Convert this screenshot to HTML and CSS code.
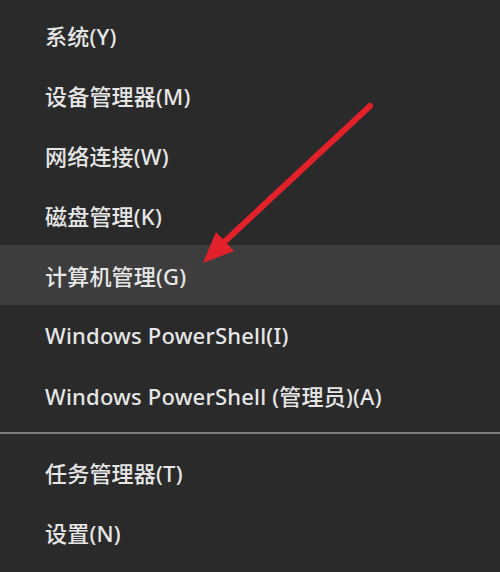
FILE: index.html
```html
<!DOCTYPE html>
<html lang="zh-CN">
<head>
    <meta charset="UTF-8">
    <meta name="viewport" content="width=device-width, initial-scale=1.0">
    <title>Win+X 菜单</title>
    <link rel="stylesheet" href="styles.css">
</head>
<body>
    <div class="menu">
        <div class="menu-item">系统(Y)</div>
        <div class="menu-item">设备管理器(M)</div>
        <div class="menu-item">网络连接(W)</div>
        <div class="menu-item">磁盘管理(K)</div>
        <div class="menu-item menu-item-active">计算机管理(G)</div>
        <div class="menu-item">Windows PowerShell(I)</div>
        <div class="menu-item">Windows PowerShell (管理员)(A)</div>
        <div class="menu-separator"></div>
        <div class="menu-item">任务管理器(T)</div>
        <div class="menu-item">设置(N)</div>

        <!-- annotation arrow pointing at 计算机管理 -->
        <svg class="arrow" width="500" height="572" viewBox="0 0 500 572">
            <line x1="370" y1="106" x2="222" y2="244" stroke="#e3212b" stroke-width="6" stroke-linecap="round"/>
            <polygon points="203,263 216,232 234,251" fill="#e3212b"/>
        </svg>
    </div>
</body>
</html>
```

FILE: styles.css
```css
body {
    margin: 0;
    padding: 0;
    background-color: #2a2a2a;
    font-family: "Noto Sans", "Noto Sans CJK SC", sans-serif;
}
.menu {
    position: relative;
    width: 500px;
    height: 572px;
    padding-top: 5px;
    box-sizing: border-box;
    background-color: #2a2a2a;
    overflow: hidden;
}
.menu-item {
    height: 60px;
    display: flex;
    align-items: center;
    padding-left: 45px;
    font-size: 22px;
    font-weight: 500;
    letter-spacing: 0.2px;
    color: #e6e6e6;
}
.menu-item-active {
    background-color: #3d3d3d;
}
.menu-separator {
    height: 2px;
    margin: 7px 0 8px;
    background-color: #7e7e7e;
}
.arrow {
    position: absolute;
    left: 0;
    top: 0;
    pointer-events: none;
}
```
